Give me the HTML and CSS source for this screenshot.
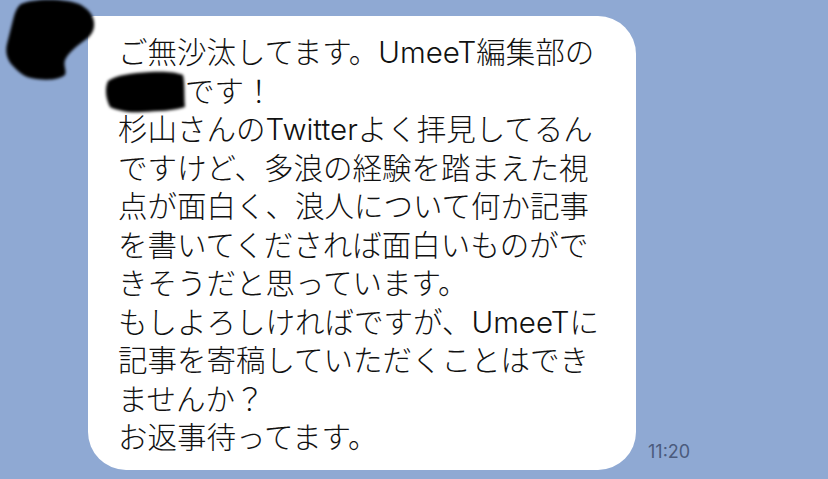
FILE: index.html
```html
<!DOCTYPE html>
<html lang="ja">
<head>
<meta charset="utf-8">
<link rel="stylesheet" href="styles.css">
</head>
<body>
<div class="chat">
  <div class="row">
    <div class="bubble">
      <div class="line">ご無沙汰してます。<span class="latin">UmeeT</span>編集部の</div>
      <div class="line"><span class="name"><svg class="redact" viewBox="0 0 86 48" width="86" height="48"><defs><filter id="b2" x="-20%" y="-20%" width="140%" height="140%"><feGaussianBlur stdDeviation="1.6"/></filter></defs><path filter="url(#b2)" fill="#000" d="M6 14 C14 8 30 6 48 5 C62 4 74 5 81 8 C83 16 82 28 83 40 C72 44 56 44 40 45 C28 46 16 44 8 40 C3 30 3 20 6 14 Z"/></svg></span>です！</div>
      <div class="line">杉山さんの<span class="latin">Twitter</span>よく拝見してるん</div>
      <div class="line">ですけど、多浪の経験を踏まえた視</div>
      <div class="line">点が面白く、浪人について何か記事</div>
      <div class="line">を書いてくだされば面白いものがで</div>
      <div class="line">きそうだと思っています。</div>
      <div class="line">もしよろしければですが、<span class="latin">UmeeT</span>に</div>
      <div class="line">記事を寄稿していただくことはでき</div>
      <div class="line">ませんか？</div>
      <div class="line">お返事待ってます。</div>
    </div>
    <div class="time">11:20</div>
  </div>
  <svg class="avatar" viewBox="0 0 100 90" width="100" height="90"><defs><filter id="b1" x="-20%" y="-20%" width="140%" height="140%"><feGaussianBlur stdDeviation="1.8"/></filter></defs><path filter="url(#b1)" fill="#000" d="M20 4 C34 -2 62 -2 78 4 C86 8 92 14 93 22 C94 30 90 36 84 40 C76 46 68 52 64 60 C62 66 66 70 64 75 C58 80 44 81 30 78 C22 76 18 72 12 66 C6 60 4 52 6 44 C8 36 10 28 12 20 C14 12 16 7 20 4 Z"/></svg>
</div>
</body>
</html>
```
FILE: styles.css
```css
html, body {
  margin: 0;
  padding: 0;
}
body {
  background: #8fa9d3;
  width: 828px;
  height: 479px;
  overflow: hidden;
  font-family: "Noto Sans CJK JP", "Noto Sans", sans-serif;
}
.chat {
  position: relative;
  width: 828px;
  height: 479px;
}
.row {
  display: flex;
  align-items: flex-end;
  gap: 12px;
  padding: 16px 0 0 88px;
}
.bubble {
  background: #ffffff;
  width: 518px;
  padding: 15px 0 15px 30px;
  border-radius: 6px 38px 38px 38px;
  color: #111111;
  font-size: 29.5px;
  font-weight: 300;
  line-height: 38.5px;
}
.line {
  white-space: nowrap;
  height: 38.5px;
}
.latin {
  font-family: "Inter", "Noto Sans CJK JP", sans-serif;
  font-weight: 300;
  line-height: 0;
}
.name {
  position: relative;
  display: inline-block;
  width: 67px;
  height: 38.5px;
  vertical-align: top;
}
.redact {
  position: absolute;
  left: -16px;
  top: -3px;
}
.time {
  font-family: "Inter", "Noto Sans", sans-serif;
  font-size: 18px;
  line-height: 20px;
  color: #4b5b7d;
  margin-bottom: 8px;
}
.avatar {
  position: absolute;
  left: 1px;
  top: 0;
}
```
